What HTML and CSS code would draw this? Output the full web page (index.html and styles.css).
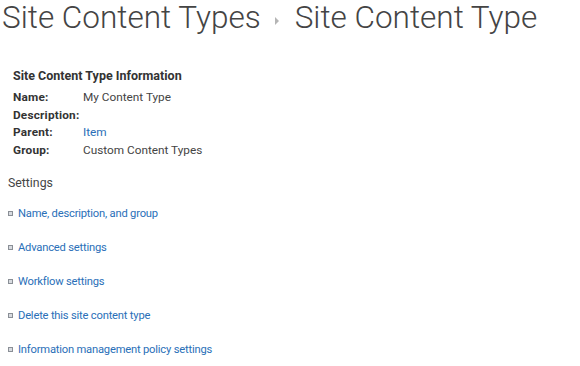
FILE: index.html
```html
<!DOCTYPE html>
<html>
<head>
<meta charset="utf-8">
<link rel="stylesheet" href="styles.css">
</head>
<body>
<div class="page">
  <h1 class="title"><span>Site Content Types</span><span class="sep"></span><span>Site Content Type</span></h1>
  <div class="info">
    <div class="info-head">Site Content Type Information</div>
    <div class="row"><span class="lbl">Name:</span><span class="val">My Content Type</span></div>
    <div class="row"><span class="lbl">Description:</span><span class="val"></span></div>
    <div class="row"><span class="lbl">Parent:</span><a class="val link">Item</a></div>
    <div class="row"><span class="lbl">Group:</span><span class="val">Custom Content Types</span></div>
  </div>
  <div class="settings-head">Settings</div>
  <ul class="settings">
    <li><span class="bullet"></span><a class="link">Name, description, and group</a></li>
    <li><span class="bullet"></span><a class="link">Advanced settings</a></li>
    <li><span class="bullet"></span><a class="link">Workflow settings</a></li>
    <li><span class="bullet"></span><a class="link">Delete this site content type</a></li>
    <li><span class="bullet"></span><a class="link">Information management policy settings</a></li>
  </ul>
</div>
</body>
</html>
```
FILE: styles.css
```css
html, body { margin: 0; padding: 0; background: #fff; }
body { font-family: Roboto, "Liberation Sans", sans-serif; color: #444; }
.page { padding: 0 0 0 2px; }
.title {
  margin: 0;
  font-family: Roboto, sans-serif;
  font-weight: 300;
  font-size: 31.5px;
  line-height: 36px;
  color: #444;
  display: flex;
  align-items: center;
  white-space: nowrap;
}
.sep {
  width: 0; height: 0;
  border-left: 4px solid #b5b5b5;
  border-top: 4px solid transparent;
  border-bottom: 4px solid transparent;
  margin: 6px 16px 0 14px;
}
.info { padding: 31px 0 0 11px; font-size: 11.8px; }
.info-head { font-weight: 700; font-size: 12.5px; color: #333; line-height: 18px; margin-bottom: 4px; }
.row { display: flex; line-height: 17.5px; }
.lbl { width: 70px; font-weight: 700; color: #333; letter-spacing: 0.2px; }
.val { color: #444; }
.link { color: #2a6fb8; text-decoration: none; }
.settings-head { font-size: 12.3px; color: #444; padding: 15px 0 0 6px; line-height: 18px; }
.settings { list-style: none; margin: 0; padding: 13px 0 0 6px; font-size: 11.2px; letter-spacing: -0.2px; }
.settings li { display: flex; align-items: center; height: 17px; margin-bottom: 17px; }
.bullet {
  width: 3px; height: 3px;
  border: 1px solid #8a8f96;
  background: #d8dbe0;
  margin-right: 5px;
}
```
